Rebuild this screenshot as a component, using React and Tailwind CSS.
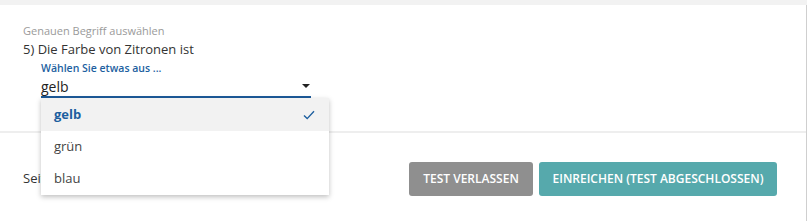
import React from "react";

const options = ["gelb", "grün", "blau"];

function CheckIcon() {
  return (
    <svg width="12" height="10" viewBox="0 0 12 10" fill="none">
      <path d="M1 5.5 L4.2 8.6 L11 1.2" stroke="#1d5f9f" strokeWidth="1.4" />
    </svg>
  );
}

export default function App() {
  const selected = "gelb";
  return (
    <div className="h-[221px] w-[807px] bg-white font-['Open_Sans',sans-serif] text-[#333] overflow-hidden">
      <div className="h-[5px] bg-[#f2f2f2]" />
      <div className="h-[216px] border-r border-[#cfcfcf]">
        <div className="h-[126px] px-[23px] pt-[18px]">
          <div className="text-[11px] leading-[16px] text-[#9a9a9a]">
            Genauen Begriff auswählen
          </div>
          <div className="mt-[1px] text-[13px] leading-[18px] text-[#333]">
            5) Die Farbe von Zitronen ist
          </div>
          <div className="ml-[18px] w-[270px]">
            <div className="mt-[3px] text-[10.5px] font-semibold leading-[14px] text-[#1d5f9f]">
              Wählen Sie etwas aus ...
            </div>
            <div className="relative mt-[2px]">
              <div className="flex h-[21px] items-center justify-between border-b-2 border-[#1d5a99] pb-[1px]">
                <span className="text-[14px] leading-[19px] text-[#222]">gelb</span>
                <span className="mr-[1px] h-0 w-0 border-x-[4px] border-t-[4px] border-x-transparent border-t-[#222]" />
              </div>
              <ul className="absolute left-0 top-full z-10 w-[288px] bg-white shadow-[0_2px_5px_rgba(0,0,0,0.25)]">
                {options.map((o) => (
                  <li
                    key={o}
                    className={
                      o === selected
                        ? "flex h-[33px] items-center justify-between bg-[#f2f2f2] pl-[13px] pr-[14px] text-[13px] font-bold text-[#1d5f9f]"
                        : "flex h-[32px] items-center pl-[13px] text-[13px] text-[#444]"
                    }
                  >
                    <span>{o}</span>
                    {o === selected && <CheckIcon />}
                  </li>
                ))}
              </ul>
            </div>
          </div>
        </div>
        <div className="h-[2px] bg-[#eeeeee]" />
        <div className="flex items-center justify-between pl-[23px] pr-[29px] pt-[29px]">
          <span className="text-[13px] text-[#333]">Seite 1 von 1</span>
          <div className="flex gap-[6px]">
            <button className="h-[34px] w-[124px] rounded-[3px] bg-[#8f8f8f] text-[12px] font-semibold text-white">
              TEST VERLASSEN
            </button>
            <button className="h-[34px] w-[238px] rounded-[3px] bg-[#56a9ac] text-[12px] font-semibold text-white">
              EINREICHEN (TEST ABGESCHLOSSEN)
            </button>
          </div>
        </div>
      </div>
    </div>
  );
}
